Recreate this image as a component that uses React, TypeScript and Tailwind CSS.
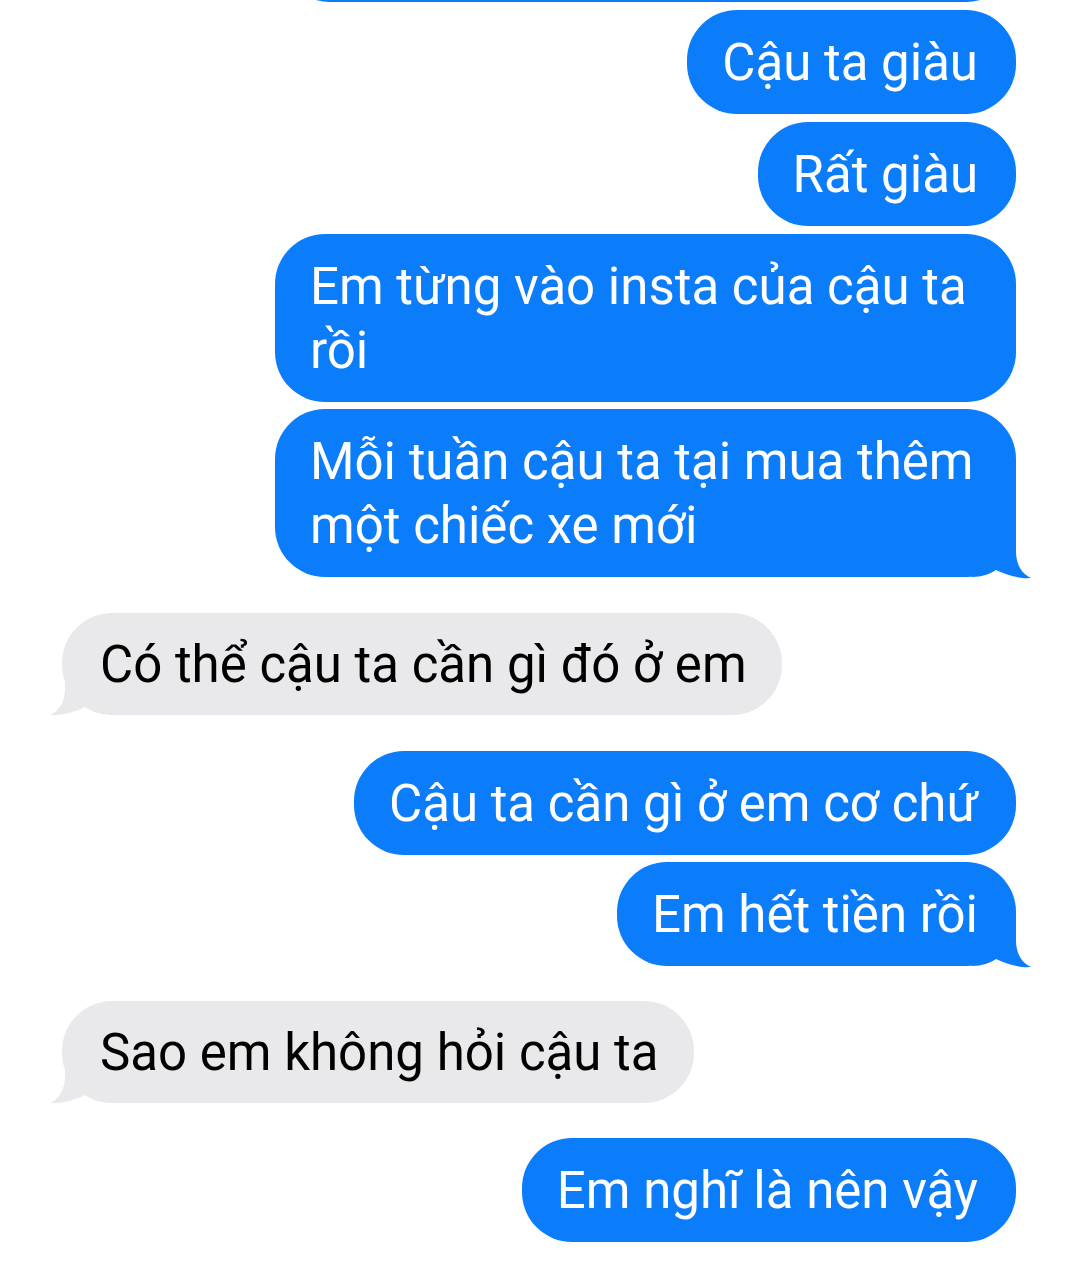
type Message = {
  text: string;
  mine: boolean;
  tail?: boolean;
  spacing: string;
};

const messages: Message[] = [
  { text: "Cậu ta giàu", mine: true, spacing: "mt-2" },
  { text: "Rất giàu", mine: true, spacing: "mt-2" },
  { text: "Em từng vào insta của cậu ta rồi", mine: true, spacing: "mt-2" },
  { text: "Mỗi tuần cậu ta tại mua thêm một chiếc xe mới", mine: true, tail: true, spacing: "mt-[7px]" },
  { text: "Có thể cậu ta cần gì đó ở em", mine: false, tail: true, spacing: "mt-9" },
  { text: "Cậu ta cần gì ở em cơ chứ", mine: true, spacing: "mt-9" },
  { text: "Em hết tiền rồi", mine: true, tail: true, spacing: "mt-[7px]" },
  { text: "Sao em không hỏi cậu ta", mine: false, tail: true, spacing: "mt-[35px]" },
  { text: "Em nghĩ là nên vậy", mine: true, spacing: "mt-[35px]" },
];

function Tail({ mine }: { mine: boolean }) {
  return (
    <svg
      width={60}
      height={50}
      viewBox="0 0 60 50"
      className={
        mine
          ? "absolute right-[-16px] bottom-[-2px] fill-[#0b7dfa]"
          : "absolute left-[-13px] bottom-[-1px] -scale-x-100 fill-[#e9e9eb]"
      }
    >
      <path d="M0 0 L44 0 L44 22 C44 36 50 45 59 49 C48 50 34 46 24 41 C18 45 10 48 0 48 Z" />
    </svg>
  );
}

function Bubble({ msg }: { msg: Message }) {
  return (
    <div className={msg.mine ? `flex justify-end ${msg.spacing}` : `flex justify-start ${msg.spacing}`}>
      <div
        className={
          msg.mine
            ? "relative max-w-[741px] rounded-[50px] bg-[#0b7dfa] pl-[35px] pr-[38px] pt-[21px] pb-[19px] text-white"
            : "relative max-w-[741px] rounded-[50px] bg-[#e9e9eb] pl-[38px] pr-[35px] pt-[20px] pb-[18px] text-black"
        }
      >
        {msg.tail && <Tail mine={msg.mine} />}
        <p className="relative">{msg.text}</p>
      </div>
    </div>
  );
}

export default function App() {
  return (
    <div className="min-h-[1263px] overflow-hidden bg-white pl-[62px] pr-[64px] text-[51px] leading-[64px] [font-family:Roboto,'Liberation_Sans',sans-serif]">
      <div className="flex justify-end">
        <div className="mt-[-98px] h-[100px] w-[736px] rounded-[50px] bg-[#0b7dfa]" />
      </div>
      {messages.map((m) => (
        <Bubble key={m.text} msg={m} />
      ))}
    </div>
  );
}
